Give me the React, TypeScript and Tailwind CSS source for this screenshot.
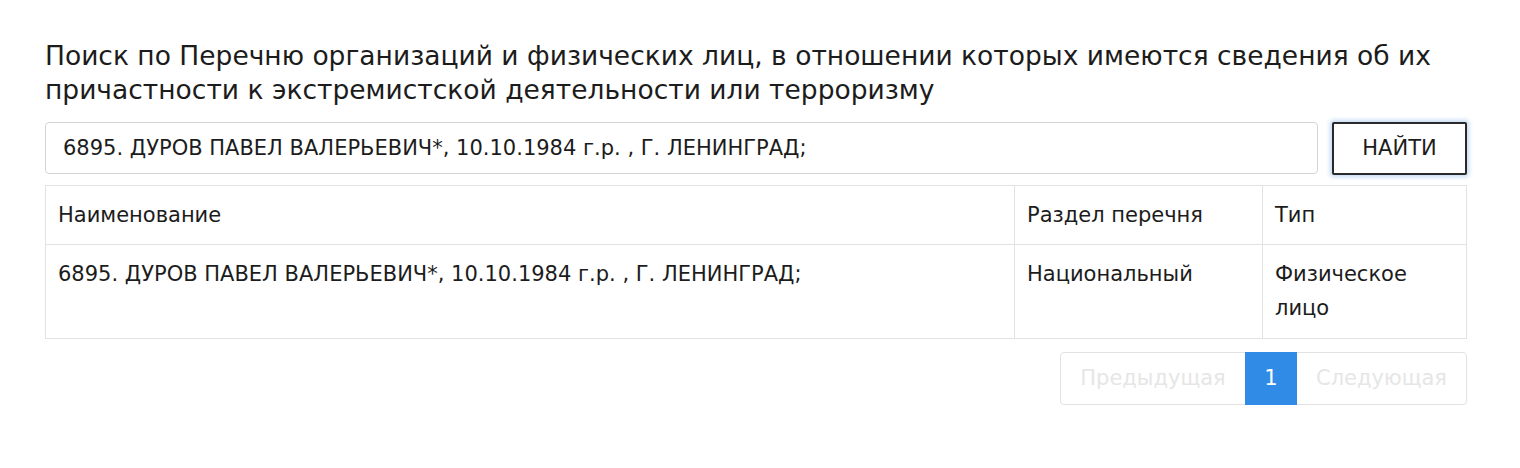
import React from 'react';

interface Row {
  id: number;
  name: string;
  section: string;
  kind: string;
}

const rows: Row[] = [
  {
    id: 6895,
    name: '6895. ДУРОВ ПАВЕЛ ВАЛЕРЬЕВИЧ*, 10.10.1984 г.р. , Г. ЛЕНИНГРАД;',
    section: 'Национальный',
    kind: 'Физическое лицо',
  },
];

const App: React.FC = () => {
  return (
    <div className="min-h-[468px] bg-white font-['DejaVu_Sans',sans-serif] text-[#1c1c1c]">
      <div className="pl-[45px] pr-[53px] pt-[39px]">
        <h1 className="text-[26.5px] leading-[34px] font-normal mb-[15px]">
          Поиск по Перечню организаций и физических лиц, в отношении которых имеются сведения об их
          причастности к экстремистской деятельности или терроризму
        </h1>

        <div className="flex gap-[14px] mb-[10px]">
          <input
            className="flex-1 h-[52px] rounded-[4px] border border-[#d4d4d4] px-[17px] text-[21px] text-[#1c1c1c] outline-none"
            defaultValue="6895. ДУРОВ ПАВЕЛ ВАЛЕРЬЕВИЧ*, 10.10.1984 г.р. , Г. ЛЕНИНГРАД;"
          />
          <button className="w-[135px] h-[53px] rounded-[2px] border-2 border-[#2a2a2a] bg-white text-[21px] shadow-[0_0_4px_2px_rgba(120,170,230,0.45)]">
            НАЙТИ
          </button>
        </div>

        <table className="w-full border-collapse border border-[#e2e2e2] text-[21px] leading-[34px]">
          <thead>
            <tr>
              <th className="border border-[#e2e2e2] px-[12px] py-[12px] text-left font-normal">Наименование</th>
              <th className="w-[248px] border border-[#e2e2e2] px-[12px] py-[12px] text-left font-normal">Раздел перечня</th>
              <th className="w-[204px] border border-[#e2e2e2] px-[12px] py-[12px] text-left font-normal">Тип</th>
            </tr>
          </thead>
          <tbody>
            {rows.map((row) => (
              <tr key={row.id}>
                <td className="border border-[#e2e2e2] px-[12px] pt-[12px] pb-[13px] align-top">{row.name}</td>
                <td className="border border-[#e2e2e2] px-[12px] pt-[12px] pb-[13px] align-top">{row.section}</td>
                <td className="border border-[#e2e2e2] px-[12px] pt-[12px] pb-[13px] align-top">{row.kind}</td>
              </tr>
            ))}
          </tbody>
        </table>

        <div className="flex justify-end mt-[13px]">
          <div className="flex h-[53px] rounded-[4px] border border-[#e2e2e2] text-[21px]">
            <span className="flex items-center justify-center w-[184px] text-[#e6e6e6]">Предыдущая</span>
            <span className="flex items-center justify-center w-[52px] -my-px bg-[#2f8be5] text-white">1</span>
            <span className="flex items-center justify-center w-[169px] text-[#e6e6e6]">Следующая</span>
          </div>
        </div>
      </div>
    </div>
  );
};

export default App;
